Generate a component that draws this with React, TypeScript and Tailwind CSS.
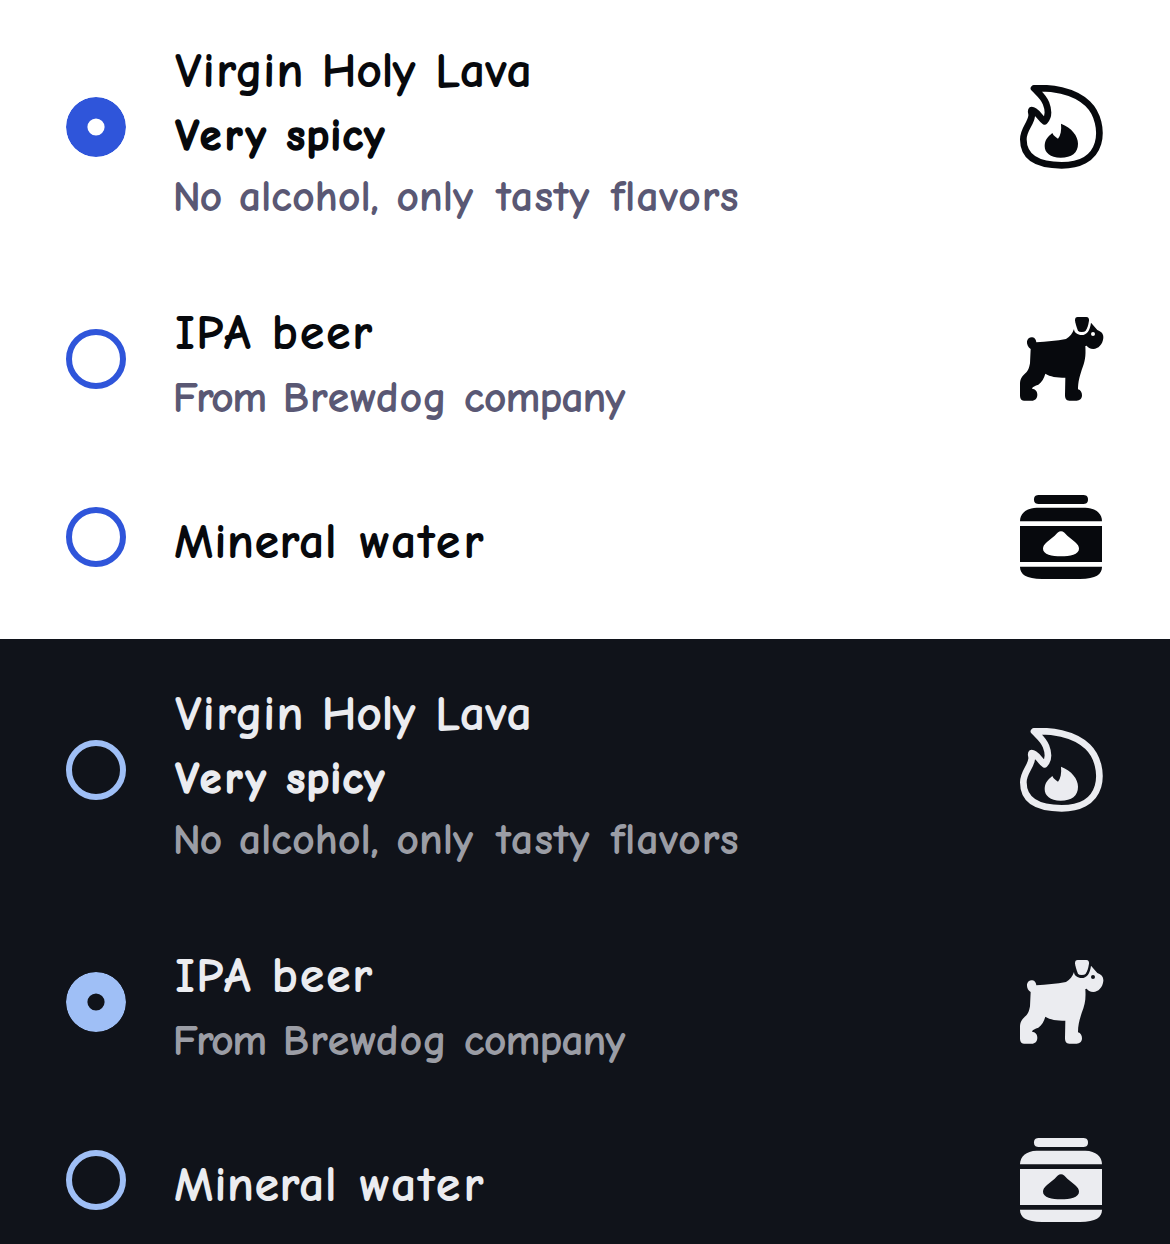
import { useState } from "react";
import type { ReactNode } from "react";

type Word = { text: string; box: string };
type Option = {
  id: string;
  height: string;
  offset: string;
  title: Word[];
  subtitle?: Word[];
  description?: Word[];
  descriptionGap?: string;
  icon: ReactNode;
};

function FlameIcon() {
  return (
    <svg viewBox="30 27 252 252" className="size-[84px]" fill="currentColor" aria-hidden="true">
      <path
        d="M72 37C120 34 190 42 233 83C264 113 275 163 264 202C250 250 205 268 155 268C90 268 40 250 40 190C40 160 62 145 65 120C66 111 61 105 65 102C80 102 88 126 104 136C114 125 117 105 108 82C100 61 86 52 72 37Z"
        fill="none"
        stroke="currentColor"
        strokeWidth="20"
        strokeLinejoin="round"
      />
      <path d="M153 143C185 155 204 180 204 203C204 230 185 245 152 245C120 245 104 230 104 210C104 193 113 182 127 171C131 180 137 183 144 188C152 178 155 162 153 143Z" />
    </svg>
  );
}

function DogIcon() {
  return (
    <svg viewBox="30 21 252 252" className="size-[84px]" fill="currentColor" aria-hidden="true">
      <path d="M203 21H229Q238 22 237 32C235 45 232 55 227 62Q224 66 215 66Q206 66 204 62C199 50 196 40 195 31Q195 21 203 21Z" />
      <path
        fillRule="evenodd"
        d="M192 57C192 68 203 75 215 75C230 75 240 62 243 38L262 60C275 65 281 72 280 84C278 104 265 116 250 117C240 117 234 112 230 107L226 108C228 140 225 155 215 180C209 200 204 215 204 238C212 240 216 248 216 256C216 266 209 272 200 272H178C168 272 165 265 165 255L166 203C140 203 120 200 106 191C102 205 96 215 85 224C75 228 68 229 66 236C75 237 82 243 82 254C82 265 75 272 65 272H42C33 272 30 265 30 256V222C30 205 38 198 46 190C56 182 58 170 60 160L62 117C54 113 50 102 51 94C52 86 60 81 67 82C75 83 78 90 79 97C110 95 140 92 168 87C180 80 188 70 192 57ZM249 66A6 6 0 1 0 249 78A6 6 0 1 0 249 66Z"
      />
    </svg>
  );
}

function JarIcon() {
  return (
    <svg viewBox="30 24 252 252" className="size-[84px]" fill="currentColor" aria-hidden="true">
      <path d="M90 24H216C230 24 234 28 234 37.500C234 47 230 51 216 51H90C76 51 72 47 72 37.500C72 28 76 24 90 24Z" />
      <path d="M30 103C30 80 48 63 80 62H226C258 63 276 80 276 103Z" />
      <path
        fillRule="evenodd"
        d="M30 117H276V225H30ZM153 133C146 133 141 139 134 146L111 165C103 172 99 178 99 185C99 202 126 208 153 208C180 208 207 202 207 185C207 178 203 172 195 165L172 146C165 139 160 133 153 133Z"
      />
      <path d="M30 239H276C276 262 258 275 210 276H96C48 275 30 262 30 239Z" />
    </svg>
  );
}

const options: Option[] = [
  {
    id: "lava",
    height: "h-[254px]",
    offset: "pt-[11px]",
    title: [
      { text: "Virgin", box: "ml-[4px] w-[146.5px] tracking-[2.9px]" },
      { text: "Holy", box: "w-[113.5px] tracking-[1.2px]" },
      { text: "Lava", box: "tracking-[2.3px]" },
    ],
    subtitle: [
      { text: "Very", box: "ml-[3.5px] w-[111px] tracking-[3.5px]" },
      { text: "spicy", box: "tracking-[1.4px]" },
    ],
    description: [
      { text: "No", box: "ml-[1.5px] w-[66px] tracking-[0.2px]" },
      { text: "alcohol,", box: "w-[157.5px] tracking-[1.3px]" },
      { text: "only", box: "w-[101px] tracking-[1.4px]" },
      { text: "tasty", box: "w-[114px] tracking-[3.1px]" },
      { text: "flavors", box: "tracking-[2.4px]" },
    ],
    icon: <FlameIcon />,
  },
  {
    id: "beer",
    height: "h-[210px]",
    offset: "pt-[11px]",
    title: [
      { text: "IPA", box: "ml-[4px] w-[96.5px] tracking-[3px]" },
      { text: "beer", box: "tracking-[3.3px]" },
    ],
    description: [
      { text: "From", box: "ml-[1.5px] w-[110px] -tracking-[0.2px]" },
      { text: "Brewdog", box: "w-[181px] tracking-[2.2px]" },
      { text: "company", box: "tracking-[0.4px]" },
    ],
    descriptionGap: "mt-[3px]",
    icon: <DogIcon />,
  },
  {
    id: "water",
    height: "h-[146px]",
    offset: "pt-[12px]",
    title: [
      { text: "Mineral", box: "ml-[2.5px] w-[186px] tracking-[2.1px]" },
      { text: "water", box: "tracking-[4.6px]" },
    ],
    icon: <JarIcon />,
  },
];

function Line({ words, className }: { words: Word[]; className: string }) {
  return (
    <span className={`flex whitespace-pre ${className}`}>
      {words.map((word) => (
        <span key={word.text} className={`shrink-0 ${word.box}`}>
          {word.text + " "}
        </span>
      ))}
    </span>
  );
}

function Radio({ checked, dark }: { checked: boolean; dark: boolean }) {
  const ring = dark ? "border-[#9fbff6]" : "border-[#2f55da]";
  const shape = "size-[60px] shrink-0 rounded-full";
  if (checked) {
    return (
      <svg viewBox="0 0 60 60" className={`${shape} ${dark ? "text-[#9fbff6]" : "text-[#2f55da]"}`} aria-hidden="true">
        <circle cx="30" cy="30" r="19.3" fill="none" stroke="currentColor" strokeWidth="21.4" />
      </svg>
    );
  }
  return <span className={`${shape} border-[6px] ${ring}`} />;
}

function RadioList({ dark, initial }: { dark: boolean; initial: string }) {
  const [selected, setSelected] = useState(initial);
  return (
    <section
      role="radiogroup"
      className={
        dark
          ? "h-[605px] overflow-hidden bg-[#10131a] pt-1 text-[#ebecf0]"
          : "h-[639px] bg-white text-[#07090d]"
      }
    >
      {options.map((option) => (
        <button
          key={option.id}
          type="button"
          role="radio"
          aria-checked={selected === option.id}
          onClick={() => setSelected(option.id)}
          className={`flex w-full items-center px-[66px] text-left ${option.height}`}
        >
          <Radio checked={selected === option.id} dark={dark} />
          <span className={`ml-[46px] flex flex-1 flex-col ${option.offset}`}>
            <Line words={option.title} className="text-[46px] leading-[64px] [-webkit-text-stroke:2.2px_currentColor]" />
            {option.subtitle && (
              <Line words={option.subtitle} className="text-[43.5px] leading-[64px] font-bold [-webkit-text-stroke:1.6px_currentColor]" />
            )}
            {option.description && (
              <Line
                words={option.description}
                className={`text-[40.5px] leading-[58px] [-webkit-text-stroke:1.9px_currentColor] ${option.descriptionGap ?? ""} ${dark ? "text-[#9b9da5]" : "text-[#5a5874]"}`}
              />
            )}
          </span>
          {option.icon}
        </button>
      ))}
    </section>
  );
}

export default function App() {
  return (
    <main className="h-[1244px] w-[1170px] overflow-hidden font-['Comic_Neue','Chalkboard_SE',Inter,sans-serif]">
      <RadioList dark={false} initial="lava" />
      <RadioList dark initial="beer" />
    </main>
  );
}
